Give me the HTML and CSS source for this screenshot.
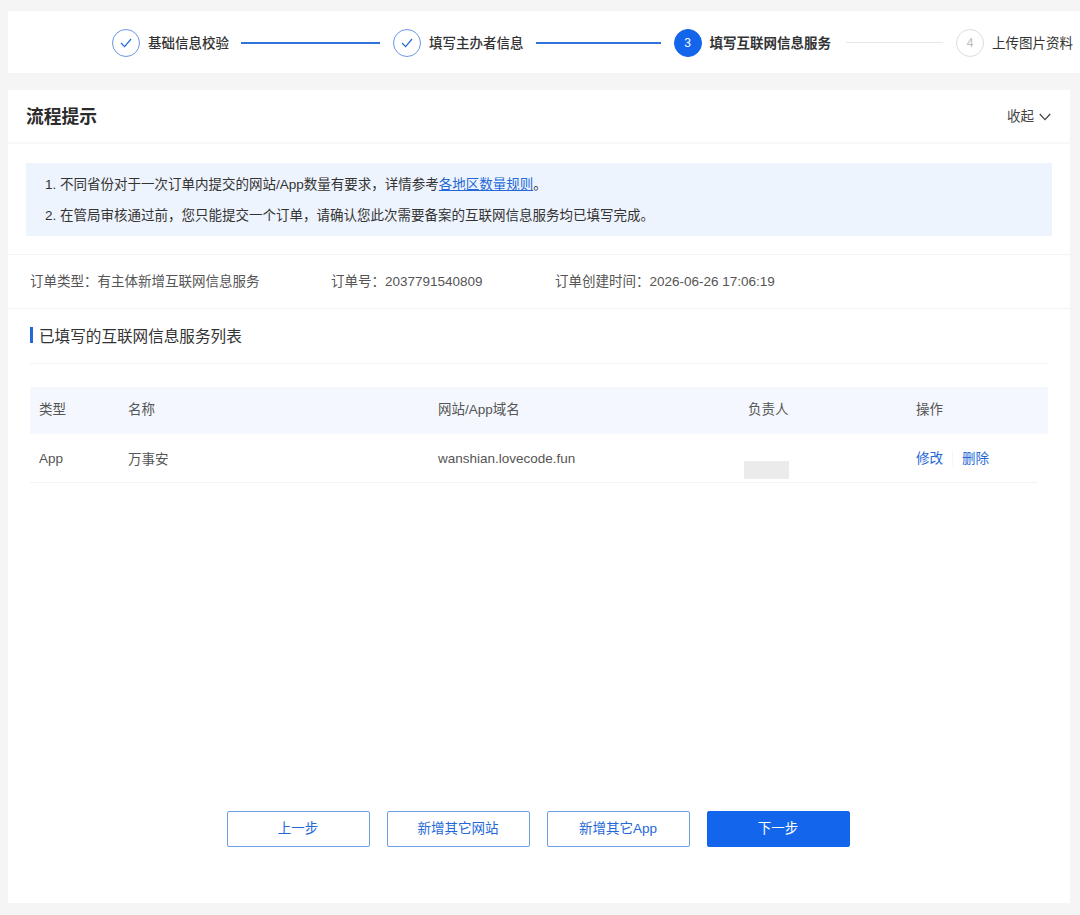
FILE: index.html
```html
<!DOCTYPE html>
<html lang="zh-CN">
<head>
    <meta charset="UTF-8">
    <title>填写互联网信息服务</title>
    <link rel="stylesheet" href="styles.css">
</head>
<body>
    <nav class="steps">
        <div class="step step-done">
            <span class="step-icon">
                <svg width="12" height="10" viewBox="0 0 12 10"><path d="M1 5 L4.6 8.6 L11 1" fill="none" stroke="currentColor" stroke-width="1.2"/></svg>
            </span>
            <span class="step-name">基础信息校验</span>
        </div>
        <span class="step-line line-1"></span>
        <div class="step step-done">
            <span class="step-icon">
                <svg width="12" height="10" viewBox="0 0 12 10"><path d="M1 5 L4.6 8.6 L11 1" fill="none" stroke="currentColor" stroke-width="1.2"/></svg>
            </span>
            <span class="step-name">填写主办者信息</span>
        </div>
        <span class="step-line line-2"></span>
        <div class="step step-active">
            <span class="step-icon">3</span>
            <span class="step-name">填写互联网信息服务</span>
        </div>
        <span class="step-line line-3 line-todo"></span>
        <div class="step step-todo">
            <span class="step-icon">4</span>
            <span class="step-name">上传图片资料</span>
        </div>
    </nav>

    <main class="panel">
        <header class="panel-head">
            <h1>流程提示</h1>
            <span class="collapse">收起
                <svg width="12" height="8" viewBox="0 0 12 8"><path d="M0.8 1 L6 6.6 L11.2 1" fill="none" stroke="#444" stroke-width="1.3"/></svg>
            </span>
        </header>

        <section class="notice-wrap">
            <div class="notice">
                <p>1. 不同省份对于一次订单内提交的网站/App数量有要求，详情参考<a href="#">各地区数量规则</a>。</p>
                <p>2. 在管局审核通过前，您只能提交一个订单，请确认您此次需要备案的互联网信息服务均已填写完成。</p>
            </div>
        </section>

        <section class="order-info">
            <span class="order-type">订单类型：有主体新增互联网信息服务</span>
            <span class="order-no">订单号：2037791540809</span>
            <span>订单创建时间：2026-06-26 17:06:19</span>
        </section>

        <section class="list">
            <h2 class="list-title">已填写的互联网信息服务列表</h2>
            <div class="table">
                <div class="table-row table-head">
                    <span>类型</span>
                    <span>名称</span>
                    <span>网站/App域名</span>
                    <span>负责人</span>
                    <span>操作</span>
                </div>
                <div class="table-row">
                    <span>App</span>
                    <span>万事安</span>
                    <span>wanshian.lovecode.fun</span>
                    <span class="owner"><i class="masked"></i></span>
                    <span class="actions"><a href="#">修改</a><a href="#">删除</a></span>
                </div>
            </div>
        </section>

        <footer class="buttons">
            <button class="btn">上一步</button>
            <button class="btn">新增其它网站</button>
            <button class="btn">新增其它App</button>
            <button class="btn btn-primary">下一步</button>
        </footer>
    </main>
</body>
</html>
```

FILE: styles.css
```css
:root {
    --blue: #1366ec;
    --text: #333;
    --line: #f3f3f3;
}

* {
    box-sizing: border-box;
    margin: 0;
    padding: 0;
}

html,
body {
    height: 915px;
    overflow: hidden;
}

body {
    font-family: "Liberation Sans", "Noto Sans CJK SC", sans-serif;
    font-size: 13.5px;
    color: var(--text);
    background-color: #f5f5f5;
    padding: 11px 0 0 8px;
}

a {
    color: #2468d8;
}

/* steps */
.steps {
    display: flex;
    align-items: center;
    height: 62px;
    padding: 1px 0 0 104px;
    background: #fff;
    white-space: nowrap;
}

.step {
    display: flex;
    align-items: center;
    flex: none;
}

.step-icon {
    display: flex;
    align-items: center;
    justify-content: center;
    width: 28px;
    height: 28px;
    margin-right: 8px;
    border: 1px solid #6a98e2;
    border-radius: 50%;
    color: #2468d8;
    font-size: 12px;
}

.step-name {
    margin-top: -1px;
    font-weight: 500;
    color: #333;
}

.step-active .step-icon {
    background: var(--blue);
    border-color: var(--blue);
    color: #fff;
}

.step-active .step-name {
    font-weight: 600;
}

.step-todo .step-icon {
    border-color: #ddd;
    color: #bbb;
}

.step-todo .step-name {
    font-weight: 400;
}

.step-line {
    flex: none;
    height: 2px;
    margin: 0 13px 0 12px;
    background: #2f72da;
}

.line-1 {
    width: 139px;
}

.line-2 {
    width: 125px;
}

.line-3 {
    width: 97px;
    margin-left: 15px;
}

.line-todo {
    height: 1px;
    background: #e8e8e8;
}

/* panel */
.panel {
    display: flex;
    flex-direction: column;
    width: 1062px;
    height: 813px;
    margin-top: 17px;
    background: #fff;
}

.panel-head {
    display: flex;
    align-items: center;
    justify-content: space-between;
    height: 54px;
    padding: 0 19px 2px 18px;
    border-bottom: 2px solid #f8f8f8;
}

.panel-head h1 {
    font-size: 17.8px;
    font-weight: 600;
    color: #2b2b2b;
}

.collapse {
    display: flex;
    align-items: center;
    gap: 5px;
    color: #444;
}

.collapse svg {
    margin-top: 4px;
}

.notice-wrap {
    padding: 19px 18px 18px;
    border-bottom: 1px solid var(--line);
}

.notice {
    height: 73px;
    padding: 6px 19px;
    background: #eef4fd;
    line-height: 31px;
    color: #333;
}

.order-info {
    display: flex;
    align-items: center;
    height: 54px;
    padding: 0 22px 3px;
    border-bottom: 1px solid var(--line);
    color: #555;
}

.order-type {
    width: 301px;
}

.order-no {
    width: 224px;
}

/* list */
.list {
    padding: 0 22px;
}

.list-title {
    display: flex;
    align-items: center;
    height: 55px;
    padding-bottom: 2px;
    border-bottom: 1px solid var(--line);
    font-size: 15.6px;
    font-weight: 400;
    color: #333;
}

.list-title::before {
    content: "";
    width: 3px;
    height: 16px;
    margin-right: 6px;
    background: #2468d8;
}

.table {
    margin-top: 23px;
}

.table-row {
    display: grid;
    grid-template-columns: 89px 310px 310px 168px 1fr;
    align-items: center;
    height: 49px;
    margin-right: 10px;
    padding-left: 9px;
    border-bottom: 1px solid var(--line);
    color: #555;
}

.table-head {
    height: 47px;
    margin-right: 0;
    padding-bottom: 6px;
    background: #f4f8fe;
    border-bottom: none;
}

.owner {
    position: relative;
}

.masked {
    position: absolute;
    top: 3px;
    left: -4px;
    width: 45px;
    height: 18px;
    background: #ebebeb;
}

.actions {
    margin-top: -2px;
}

.actions a {
    text-decoration: none;
}

.actions a + a {
    margin-left: 9px;
    padding-left: 9px;
    border-left: 1px solid #f5f5f5;
}

/* buttons */
.buttons {
    display: flex;
    justify-content: center;
    gap: 17px;
    margin-top: 328px;
    padding-right: 2px;
}

.btn {
    width: 143px;
    height: 36px;
    padding-bottom: 5px;
    background: #fff;
    border: 1px solid #6d9fe8;
    border-radius: 2px;
    color: #2468d8;
    font: inherit;
}

.btn-primary {
    background: var(--blue);
    border-color: var(--blue);
    color: #fff;
}
```
